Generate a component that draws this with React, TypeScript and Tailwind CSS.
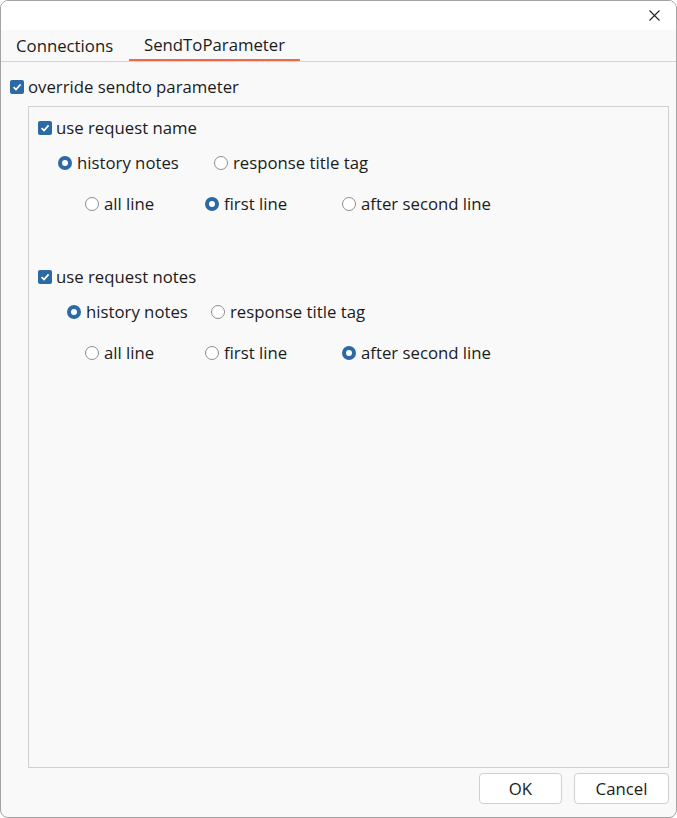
import React from 'react';

const font = { fontFamily: '"Open Sans", "Noto Sans", sans-serif' };

const CheckBox = ({ label }: { label: string }) => (
  <div className="flex items-center h-[20px]">
    <span className="w-[14px] h-[14px] rounded-[2px] bg-[#2c6aa5] flex items-center justify-center">
      <svg width="10" height="10" viewBox="0 0 10 10">
        <path d="M1.6 5.2 L4 7.6 L8.6 2.4" stroke="white" strokeWidth="1.7" fill="none" />
      </svg>
    </span>
    <span className="ml-[4px]">{label}</span>
  </div>
);

const Radio = ({ label, checked, width }: { label: string; checked?: boolean; width?: string }) => (
  <div className={`flex items-center h-[20px] ${width ?? ''}`}>
    {checked ? (
      <span className="w-[14px] h-[14px] rounded-full bg-[#2c6aa5] flex items-center justify-center">
        <span className="w-[6px] h-[6px] rounded-full bg-white" />
      </span>
    ) : (
      <span className="w-[14px] h-[14px] rounded-full border border-[#8d8d8d] bg-white" />
    )}
    <span className="ml-[5px]">{label}</span>
  </div>
);

export default function App() {
  return (
    <div
      className="w-[677px] h-[818px] border border-[#a3a3a3] rounded-lg overflow-hidden bg-[#f9f9f9] text-[16.75px] text-[#1b1b1b] flex flex-col"
      style={font}
    >
      {/* title bar */}
      <div className="h-[29px] bg-white flex justify-end items-center pr-[16px]">
        <svg width="11" height="11" viewBox="0 0 11 11">
          <path d="M0.5 0.5 L10.5 10.5 M10.5 0.5 L0.5 10.5" stroke="#222" strokeWidth="1.1" />
        </svg>
      </div>

      {/* tabs */}
      <div className="h-[32px] flex items-stretch border-b border-[#d5d5d5]">
        <div className="w-[128px] pl-[15px] flex items-center">Connections</div>
        <div className="px-[15px] flex items-center border-b-2 border-[#ee6a46]">SendToParameter</div>
      </div>

      {/* body */}
      <div className="flex-1 flex flex-col">
        <div className="pl-[9px] mt-[15px]">
          <CheckBox label="override sendto parameter" />
        </div>

        <div className="ml-[27px] mr-[7px] mt-[9px] h-[662px] border border-[#d0d0d0] flex flex-col">
          <div className="pl-[9px] mt-[11px]">
            <CheckBox label="use request name" />
          </div>
          <div className="flex pl-[29px] mt-[15px]">
            <Radio label="history notes" checked width="w-[156px]" />
            <Radio label="response title tag" />
          </div>
          <div className="flex pl-[56px] mt-[21px]">
            <Radio label="all line" width="w-[120px]" />
            <Radio label="first line" checked width="w-[137px]" />
            <Radio label="after second line" />
          </div>

          <div className="pl-[9px] mt-[53px]">
            <CheckBox label="use request notes" />
          </div>
          <div className="flex pl-[38px] mt-[15px]">
            <Radio label="history notes" checked width="w-[144px]" />
            <Radio label="response title tag" />
          </div>
          <div className="flex pl-[56px] mt-[21px]">
            <Radio label="all line" width="w-[120px]" />
            <Radio label="first line" width="w-[137px]" />
            <Radio label="after second line" checked />
          </div>
        </div>

        <div className="flex justify-end gap-[12px] mr-[7px] mt-[5px]">
          <button className="w-[83px] h-[31px] bg-white border border-[#d0d0d0] rounded-[4px]">OK</button>
          <button className="w-[95px] h-[31px] bg-white border border-[#d0d0d0] rounded-[4px]">Cancel</button>
        </div>
      </div>
    </div>
  );
}
